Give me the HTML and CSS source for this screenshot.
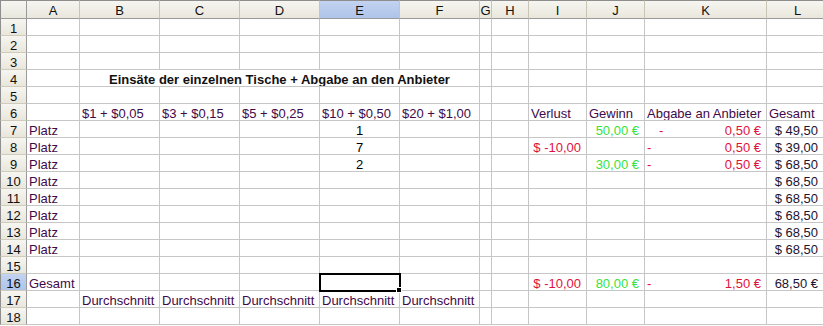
FILE: index.html
```html
<!DOCTYPE html>
<html><head>
<meta http-equiv="Content-Type" content="text/html; charset=UTF-8">
<link rel="stylesheet" href="styles.css">
<title>Tische</title>
</head><body>

<table class="sheet">
<colgroup>
<col class="w-hd"><col class="w-a"><col class="w-b"><col class="w-b"><col class="w-b"><col class="w-b"><col class="w-b">
<col class="w-g"><col class="w-h"><col class="w-i"><col class="w-i"><col class="w-k"><col class="w-l">
</colgroup>
<thead>
<tr><th class="corner"></th><th>A</th><th>B</th><th>C</th><th>D</th><th class="on">E</th><th>F</th><th>G</th><th>H</th><th>I</th><th>J</th><th>K</th><th>L</th></tr>
</thead>
<tbody>
<tr><th>1</th><td></td><td></td><td></td><td></td><td></td><td></td><td></td><td></td><td></td><td></td><td></td><td></td></tr>
<tr><th>2</th><td></td><td></td><td></td><td></td><td></td><td></td><td></td><td></td><td></td><td></td><td></td><td></td></tr>
<tr><th>3</th><td></td><td></td><td></td><td></td><td></td><td></td><td></td><td></td><td></td><td></td><td></td><td></td></tr>
<tr><th>4</th><td></td><td colspan="5" class="title">Einsäte der einzelnen Tische + Abgabe an den Anbieter</td><td></td><td></td><td></td><td></td><td></td><td></td></tr>
<tr><th>5</th><td></td><td></td><td></td><td></td><td></td><td></td><td></td><td></td><td></td><td></td><td></td><td></td></tr>
<tr><th>6</th><td></td><td class="p">$1 + $0,05</td><td class="p">$3 + $0,15</td><td class="p">$5 + $0,25</td><td class="p">$10 + $0,50</td><td class="p">$20 + $1,00</td><td></td><td></td><td class="p">Verlust</td><td class="p">Gewinn</td><td class="p">Abgabe an Anbieter</td><td class="p">Gesamt</td></tr>
<tr><th>7</th><td class="p">Platz</td><td></td><td></td><td></td><td class="mid">1</td><td></td><td></td><td></td><td></td><td class="num green">50,00 €</td><td class="num red"><span class="dash far">-</span>0,50 €</td><td class="num usd">$ 49,50</td></tr>
<tr><th>8</th><td class="p">Platz</td><td></td><td></td><td></td><td class="mid">7</td><td></td><td></td><td></td><td class="num red">$ -10,00</td><td></td><td class="num red"><span class="dash">-</span>0,50 €</td><td class="num usd">$ 39,00</td></tr>
<tr><th>9</th><td class="p">Platz</td><td></td><td></td><td></td><td class="mid">2</td><td></td><td></td><td></td><td></td><td class="num green">30,00 €</td><td class="num red"><span class="dash">-</span>0,50 €</td><td class="num usd">$ 68,50</td></tr>
<tr><th>10</th><td class="p">Platz</td><td></td><td></td><td></td><td></td><td></td><td></td><td></td><td></td><td></td><td></td><td class="num usd">$ 68,50</td></tr>
<tr><th>11</th><td class="p">Platz</td><td></td><td></td><td></td><td></td><td></td><td></td><td></td><td></td><td></td><td></td><td class="num usd">$ 68,50</td></tr>
<tr><th>12</th><td class="p">Platz</td><td></td><td></td><td></td><td></td><td></td><td></td><td></td><td></td><td></td><td></td><td class="num usd">$ 68,50</td></tr>
<tr><th>13</th><td class="p">Platz</td><td></td><td></td><td></td><td></td><td></td><td></td><td></td><td></td><td></td><td></td><td class="num usd">$ 68,50</td></tr>
<tr><th>14</th><td class="p">Platz</td><td></td><td></td><td></td><td></td><td></td><td></td><td></td><td></td><td></td><td></td><td class="num usd">$ 68,50</td></tr>
<tr><th>15</th><td></td><td></td><td></td><td></td><td></td><td></td><td></td><td></td><td></td><td></td><td></td><td></td></tr>
<tr><th class="on">16</th><td class="p">Gesamt</td><td></td><td></td><td></td><td class="active"></td><td></td><td></td><td></td><td class="num red">$ -10,00</td><td class="num green">80,00 €</td><td class="num red"><span class="dash">-</span>1,50 €</td><td class="num usd">68,50 €</td></tr>
<tr><th>17</th><td></td><td class="p">Durchschnitt</td><td class="p">Durchschnitt</td><td class="p">Durchschnitt</td><td class="p">Durchschnitt</td><td class="p">Durchschnitt</td><td></td><td></td><td></td><td></td><td></td><td></td></tr>
<tr><th>18</th><td></td><td></td><td></td><td></td><td></td><td></td><td></td><td></td><td></td><td></td><td></td><td></td></tr>
</tbody>
</table>

</body></html>
```

FILE: styles.css
```css
body {margin: 0; padding: 0; overflow: hidden; background: #fff; font-family: "Liberation Sans", Arial, sans-serif; font-size: 13px; color: #000;}

.sheet {border-collapse: separate; border-spacing: 0; table-layout: fixed; width: 829px; font-family: "Liberation Sans", Arial, sans-serif; font-size: 13px;}
.w-hd {width: 27px;}
.w-a {width: 53px;}
.w-b {width: 80px;}
.w-g {width: 12px;}
.w-h {width: 37px;}
.w-i {width: 58px;}
.w-k {width: 122px;}
.w-l {width: 62px;}

.sheet thead tr {height: 19px;}
.sheet tbody tr {height: 17px;}

.sheet td, .sheet th {padding: 0 2px; border-right: 1px solid #c6c6c6; border-bottom: 1px solid #c6c6c6; line-height: 13px; vertical-align: bottom; white-space: nowrap; overflow: hidden; font-weight: normal;}

/* headers */
.sheet th {background: linear-gradient(#f6f5f0, #e9e7dc); text-align: center; color: #111; padding: 0;}
.sheet thead th {border-top: 1px solid #8e8e8e; border-bottom: 1px solid #9a9a9a; border-right: 1px solid #c9c5b5; padding-bottom: 1px;}
.sheet tbody th {border-left: 1px solid #8e8e8e; border-right: 1px solid #9a9a9a; border-bottom: 1px solid #cfccbd;}
.sheet thead th.corner {border-left: 1px solid #8e8e8e; border-right: 1px solid #9a9a9a;}
.sheet th.on {background: linear-gradient(#c3d3f0, #aec4ea);}

/* cell text */
.sheet .p {color: #3f0a4a;}
.sheet .title {text-align: center; font-weight: bold; color: #111;}
.sheet .mid {text-align: center;}
.sheet .num {text-align: right; padding-right: 5px;}
.sheet .red {color: #e0123c;}
.sheet .green {color: #3ae23a;}
.sheet .usd {color: #1c1430; padding-right: 10px;}
.dash {float: left;}
.dash.far {margin-left: 12px;}

/* selected cell */
.sheet .active {position: relative; overflow: visible;}
.active::before {content: ""; position: absolute; left: -1px; top: -1px; right: -2px; bottom: -2px; border: 2px solid #000;}
.active::after {content: ""; position: absolute; right: -3px; bottom: -3px; width: 4px; height: 4px; background: #000; border: 1px solid #fff;}
```
